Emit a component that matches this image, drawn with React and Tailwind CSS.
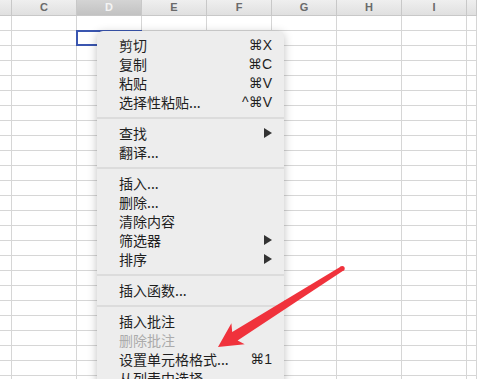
import React from "react";

const cols = ["", "C", "D", "E", "F", "G", "H", "I", ""];
const ROWS = 25;

function Arrow() {
  return (
    <svg width="8" height="10" viewBox="0 0 8 10" className="block">
      <polygon points="0,0 8,5 0,10" fill="#333" />
    </svg>
  );
}

const groups = [
  [
    { t: "剪切", s: "⌘X" },
    { t: "复制", s: "⌘C" },
    { t: "粘贴", s: "⌘V" },
    { t: "选择性粘贴...", s: "^⌘V" },
  ],
  [
    { t: "查找", a: true },
    { t: "翻译..." },
  ],
  [
    { t: "插入..." },
    { t: "删除..." },
    { t: "清除内容" },
    { t: "筛选器", a: true },
    { t: "排序", a: true },
  ],
  [{ t: "插入函数..." }],
  [
    { t: "插入批注" },
    { t: "删除批注", d: true },
    { t: "设置单元格格式...", s: "⌘1" },
    { t: "从列表中选择" },
  ],
];

export default function App() {
  return (
    <div className="relative w-[477px] h-[379px] overflow-hidden bg-white" style={{ fontFamily: '"Liberation Sans", "Noto Sans CJK SC", sans-serif' }}>
      <div className="grid grid-cols-[12px_repeat(7,65px)_1fr]">
        {cols.map((c, i) => (
          <div
            key={"h" + i}
            className={
              "h-[16px] border-r border-b border-[#c8c8c8] flex items-center justify-center text-[11px] font-bold text-[#6a6a6a] " +
              (c === "D"
                ? "bg-gradient-to-b from-[#d4d4d4] to-[#c2c2c2] text-[#f4f4f4]"
                : "bg-gradient-to-b from-[#efefef] to-[#e0e0e0]")
            }
          >
            {c}
          </div>
        ))}
        {Array.from({ length: ROWS }).map((_, r) =>
          cols.map((c, i) => (
            <div key={r + "-" + i} className="h-[15px] border-r border-b border-[#d6d6d6]" />
          ))
        )}
      </div>

      {/* selected cell */}
      <div className="absolute left-[76px] top-[30px] w-[66px] h-[16px] border-2 border-[#3a56b0]" />

      {/* context menu */}
      <div
        className="absolute left-[97px] top-[31px] w-[187px] h-[360px] rounded-[6px] bg-[#ededed] shadow-[0_2px_10px_rgba(0,0,0,0.25)] pt-[4.5px] text-[14px] text-[#1f1f1f]"
        style={{ fontFamily: '"Liberation Sans", "DejaVu Sans", "Noto Sans CJK SC", sans-serif' }}
      >
        {groups.map((g, gi) => (
          <div key={gi}>
            {gi > 0 && (
              <div className="h-[12px] flex items-center">
                <div className="w-full h-[2px] bg-[#dcdcdc]" />
              </div>
            )}
            {g.map((it, ii) => (
              <div
                key={ii}
                className={
                  "h-[19px] leading-[19px] flex items-center justify-between pl-[22px] pr-[12px] " +
                  (it.d ? "text-[#ababab]" : "")
                }
              >
                <span style={{ fontFamily: '"Noto Sans CJK SC", sans-serif' }} className="leading-[19px]">{it.t}</span>
                {it.s && <span className="leading-[19px]">{it.s}</span>}
                {it.a && <Arrow />}
              </div>
            ))}
          </div>
        ))}
      </div>

      {/* red annotation arrow */}
      <svg className="absolute left-0 top-0" width="477" height="379">
        <polygon
          points="218,347 231.4,323.2 232.2,332.1 340.9,266.4 343.5,270.6 237.6,340.5 244.7,344.3"
          fill="#f0323c"
        />
        <circle cx="342.2" cy="268.5" r="2.5" fill="#f0323c" />
      </svg>
    </div>
  );
}
